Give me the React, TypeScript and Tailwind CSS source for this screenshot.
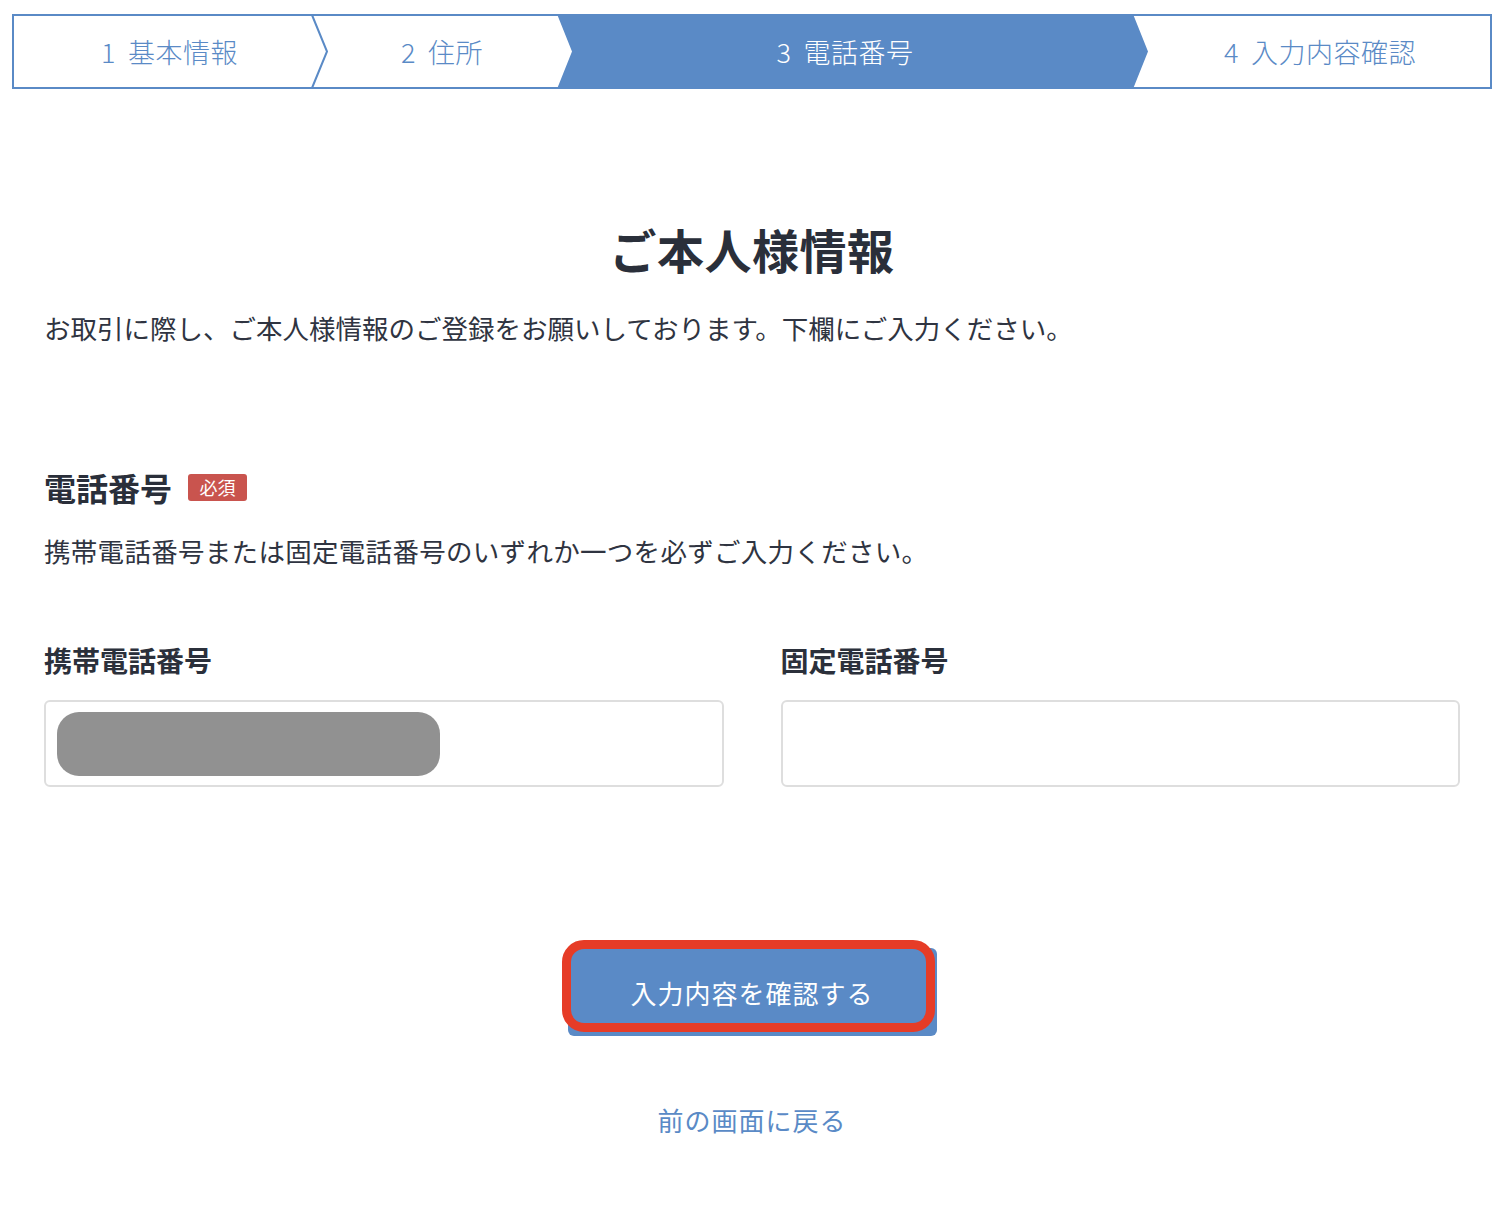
import React from "react";

const BLUE = "#5a8ac6";

function Step({ n, label, className }: { n: string; label: string; className: string }) {
  return (
    <div className={`flex items-center justify-center gap-[12px] ${className}`}>
      <span>{n}</span>
      <span>{label}</span>
    </div>
  );
}

function StepBar() {
  return (
    <div className="grid h-[75px] w-[1480px]">
      {/* chevron frame */}
      <svg
        className="col-start-1 row-start-1"
        width="1480"
        height="75"
        viewBox="0 0 1480 75"
      >
        <polygon points="545,0 1121,0 1136,37.5 1121,75 545,75 560,37.5" fill={BLUE} />
        <rect x="1" y="1" width="1478" height="73" fill="none" stroke={BLUE} strokeWidth="2" />
        <polyline points="300,1 315,37.5 300,74" fill="none" stroke={BLUE} strokeWidth="2" />
      </svg>
      <div className="col-start-1 row-start-1 flex items-center text-[27px] font-light leading-none tracking-[0.5px]">
        <Step n="1" label="基本情報" className="w-[315px] text-[#5a8ac6]" />
        <Step n="2" label="住所" className="w-[230px] text-[#5a8ac6]" />
        <Step n="3" label="電話番号" className="w-[576px] text-white" />
        <Step n="4" label="入力内容確認" className="ml-[15px] flex-1 text-[#5a8ac6]" />
      </div>
    </div>
  );
}

function PhoneField({ label, filled }: { label: string; filled?: boolean }) {
  return (
    <div className="flex flex-col">
      <div className="h-[40px] text-[28px] font-bold leading-[40px] text-[#2b303b]">{label}</div>
      <div className="mt-[20px] flex h-[87px] items-center rounded-[6px] border-2 border-[#dedede] bg-white px-[11px]">
        {filled && <div className="h-[64px] w-[383px] rounded-[22px] bg-[#919191]" />}
      </div>
    </div>
  );
}

export default function App() {
  return (
    <div
      className="min-h-[1224px] w-[1504px] bg-white text-[#2f3441]"
      style={{ fontFamily: '"Noto Sans CJK JP", "Noto Sans", sans-serif' }}
    >
      <div className="pl-[12px] pt-[14px]">
        <StepBar />
      </div>

      <div className="mx-[44px] flex flex-col">
        <h1 className="mt-[132px] h-[56px] text-center text-[47px] font-bold leading-[56px] tracking-[0.5px] text-[#2a2f3a]">
          ご本人様情報
        </h1>
        <p className="mt-[31px] h-[40px] text-[26.5px] leading-[40px]">
          お取引に際し、ご本人様情報のご登録をお願いしております。下欄にご入力ください。
        </p>

        <div className="mt-[119px] flex h-[40px] items-center">
          <h2 className="text-[32px] font-bold leading-[40px] text-[#2a2f3a]">電話番号</h2>
          <span className="ml-[16px] flex h-[27px] w-[59px] items-center justify-center rounded-[3px] bg-[#c9544e] text-[18px] leading-none text-white">
            必須
          </span>
        </div>
        <p className="mt-[24px] h-[40px] text-[26.5px] leading-[40px] tracking-[0.3px]">
          携帯電話番号または固定電話番号のいずれか一つを必ずご入力ください。
        </p>

        <div className="mt-[69px] grid grid-cols-2 gap-x-[57px]">
          <PhoneField label="携帯電話番号" filled />
          <PhoneField label="固定電話番号" />
        </div>

        <div className="mt-[161px] flex justify-center">
          <div className="relative">
            <button className="flex h-[88px] w-[369px] items-center justify-center rounded-[6px] bg-[#5a8ac6] text-[26px] tracking-[1px] text-white">
              入力内容を確認する
            </button>
            <div className="pointer-events-none absolute -left-[6px] -top-[8px] bottom-[4px] right-[2px] rounded-[22px] border-[9px] border-[#e63c27]" />
          </div>
        </div>

        <div className="mt-[64px] flex justify-center">
          <a className="h-[40px] text-[26px] leading-[40px] tracking-[1px] text-[#5a8ac6]">前の画面に戻る</a>
        </div>
      </div>
    </div>
  );
}
